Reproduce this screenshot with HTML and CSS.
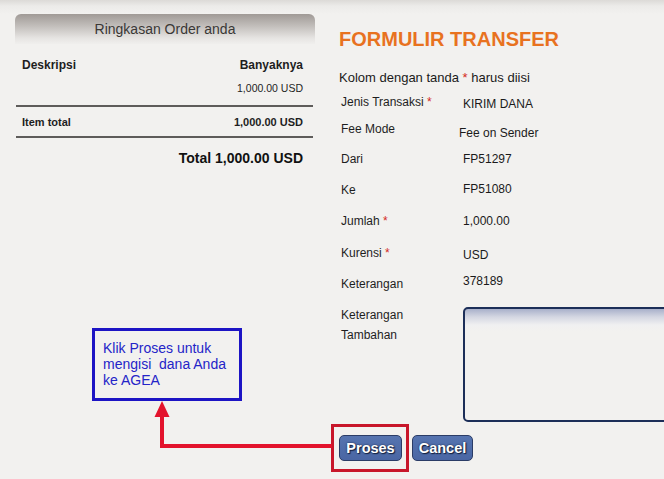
FILE: index.html
```html
<!DOCTYPE html>
<html>
<head>
<meta charset="utf-8">
<link rel="stylesheet" href="styles.css">
</head>
<body>
<div class="page">
  <section class="summary">
    <div class="summary-head">Ringkasan Order anda</div>
    <div class="sum-row sum-cols"><span>Deskripsi</span><span>Banyaknya</span></div>
    <div class="sum-row sum-amount"><span></span><span>1,000.00 USD</span></div>
    <div class="sum-row sum-item"><span>Item total</span><span>1,000.00 USD</span></div>
    <div class="sum-total">Total 1,000.00 USD</div>
  </section>

  <section class="form">
    <h1 class="title">FORMULIR TRANSFER</h1>
    <p class="intro">Kolom dengan tanda <span class="req">*</span> harus diisi</p>
    <div class="fields">
      <div class="lbl h27">Jenis Transaksi <span class="req">*</span></div><div class="val dn2">KIRIM DANA</div>
      <div class="lbl h30">Fee Mode</div><div class="val dn4 lf4">Fee on Sender</div>
      <div class="lbl h31">Dari</div><div class="val">FP51297</div>
      <div class="lbl h31">Ke</div><div class="val up1">FP51080</div>
      <div class="lbl h32">Jumlah <span class="req">*</span></div><div class="val">1,000.00</div>
      <div class="lbl h31">Kurensi <span class="req">*</span></div><div class="val dn2">USD</div>
      <div class="lbl h28">Keterangan</div><div class="val up3">378189</div>
      <div class="lbl lbl-multi">Keterangan<br>Tambahan</div><div class="val"><div class="textarea"></div></div>
    </div>
    <div class="actions">
      <div class="highlight">
        <button class="btn">Proses</button>
        <div class="red-frame"></div>
      </div>
      <button class="btn">Cancel</button>
    </div>
  </section>
</div>

<div class="callout">Klik Proses untuk<br>mengisi&nbsp; dana Anda<br>ke AGEA</div>
<svg class="arrow" width="190" height="56" viewBox="150 400 190 56">
  <polygon points="162,401 154.5,417 169.5,417" fill="#e3132c"/>
  <polyline points="162,416 162,446 332,446" fill="none" stroke="#e3132c" stroke-width="4"/>
</svg>
</body>
</html>
```

FILE: styles.css
```css
html, body {
  margin: 0;
  padding: 0;
}
body {
  width: 664px;
  height: 479px;
  overflow: hidden;
  position: relative;
  background: #f2f1ef linear-gradient(#dcdad7 0, #ecebe9 6px, #f2f1ef 14px) no-repeat;
  background-size: 100% 16px;
  font-family: "Liberation Sans", Arial, sans-serif;
  color: #1e1e1e;
}
.page {
  display: flex;
  padding: 14px 0 0 15px;
}
.summary {
  width: 300px;
  flex-shrink: 0;
}
.summary-head {
  height: 30px;
  line-height: 30px;
  text-align: center;
  font-size: 14px;
  color: #3a3836;
  border-radius: 6px 6px 0 0;
  background: linear-gradient(#a09a96 0, #c2bebb 12px, #e6e4e2 24px, #f0efed 30px);
}
.sum-row {
  display: flex;
  justify-content: space-between;
  padding: 0 12px 0 7px;
}
.sum-cols {
  margin-top: 14px;
  font-size: 12px;
  font-weight: bold;
  line-height: 14px;
}
.sum-amount {
  margin-top: 10px;
  font-size: 10.5px;
  line-height: 13px;
  padding-bottom: 10px;
  border-bottom: 2px solid #5e5c5a;
  margin-left: 1px;
  margin-right: 2px;
  padding-left: 6px;
  padding-right: 10px;
}
.sum-item {
  font-size: 11px;
  font-weight: bold;
  line-height: 14px;
  padding: 8px 10px 7px 6px;
  margin: 0 2px 0 1px;
  border-bottom: 2px solid #5e5c5a;
}
.sum-total {
  margin-top: 12px;
  text-align: right;
  padding-right: 12px;
  font-size: 14px;
  font-weight: bold;
  line-height: 17px;
  color: #111;
}
.form {
  margin-left: 24px;
  flex: 1;
  min-width: 0;
}
.title {
  margin: 13px 0 0;
  font-size: 20px;
  line-height: 24px;
  color: #e8721f;
  font-weight: bold;
}
.intro {
  margin: 19px 0 0;
  font-size: 13px;
  line-height: 15px;
  color: #1a1a1a;
}
.req {
  color: #d42a22;
}
.fields {
  margin-top: 10px;
  display: grid;
  grid-template-columns: 124px 1fr;
  font-size: 12px;
  line-height: 14px;
}
.lbl {
  padding-left: 2px;
}
.h27 { height: 27px; }
.h28 { height: 28px; }
.h30 { height: 30px; }
.h31 { height: 31px; }
.h32 { height: 32px; }
.val {
  color: #1a1a1a;
}
.dn2 { margin-top: 2px; }
.dn4 { margin-top: 4px; }
.up1 { margin-top: -1px; }
.up3 { margin-top: -3px; }
.lf4 { margin-left: -4px; }
.lbl-multi {
  line-height: 20px;
  margin-top: 0;
}
.textarea {
  margin-top: 2px;
  width: 230px;
  height: 111px;
  border: 2px solid #1c2e58;
  border-radius: 5px;
  background: linear-gradient(#a8b0ca 0, #d4d7e2 8px, #f0f0f1 16px, #f2f1ef 22px);
}
.actions {
  margin-top: 13px;
  display: flex;
  gap: 10px;
}
.highlight {
  position: relative;
}
.btn {
  display: block;
  height: 26px;
  padding: 0;
  font-family: "Liberation Sans", Arial, sans-serif;
  font-size: 14.5px;
  font-weight: bold;
  color: #fff;
  text-shadow: 0 0 2px #13203f, 1px 1px 1px #13203f;
  background: linear-gradient(#5674b0, #4a66a4);
  border: 1px solid #2b3c66;
  border-radius: 5px;
}
.highlight .btn {
  width: 63px;
}
.actions > .btn {
  width: 61px;
}
.red-frame {
  position: absolute;
  left: -8px;
  right: -7px;
  top: -11px;
  bottom: -11px;
  border: 3px solid #c8162a;
}
.callout {
  position: absolute;
  left: 92px;
  top: 328px;
  width: 129px;
  height: 56px;
  padding: 9px 7px 2px 8px;
  border: 3px solid #1d14c4;
  font-size: 14px;
  line-height: 16px;
  color: #2424c8;
}
.arrow {
  position: absolute;
  left: 150px;
  top: 400px;
}
```
